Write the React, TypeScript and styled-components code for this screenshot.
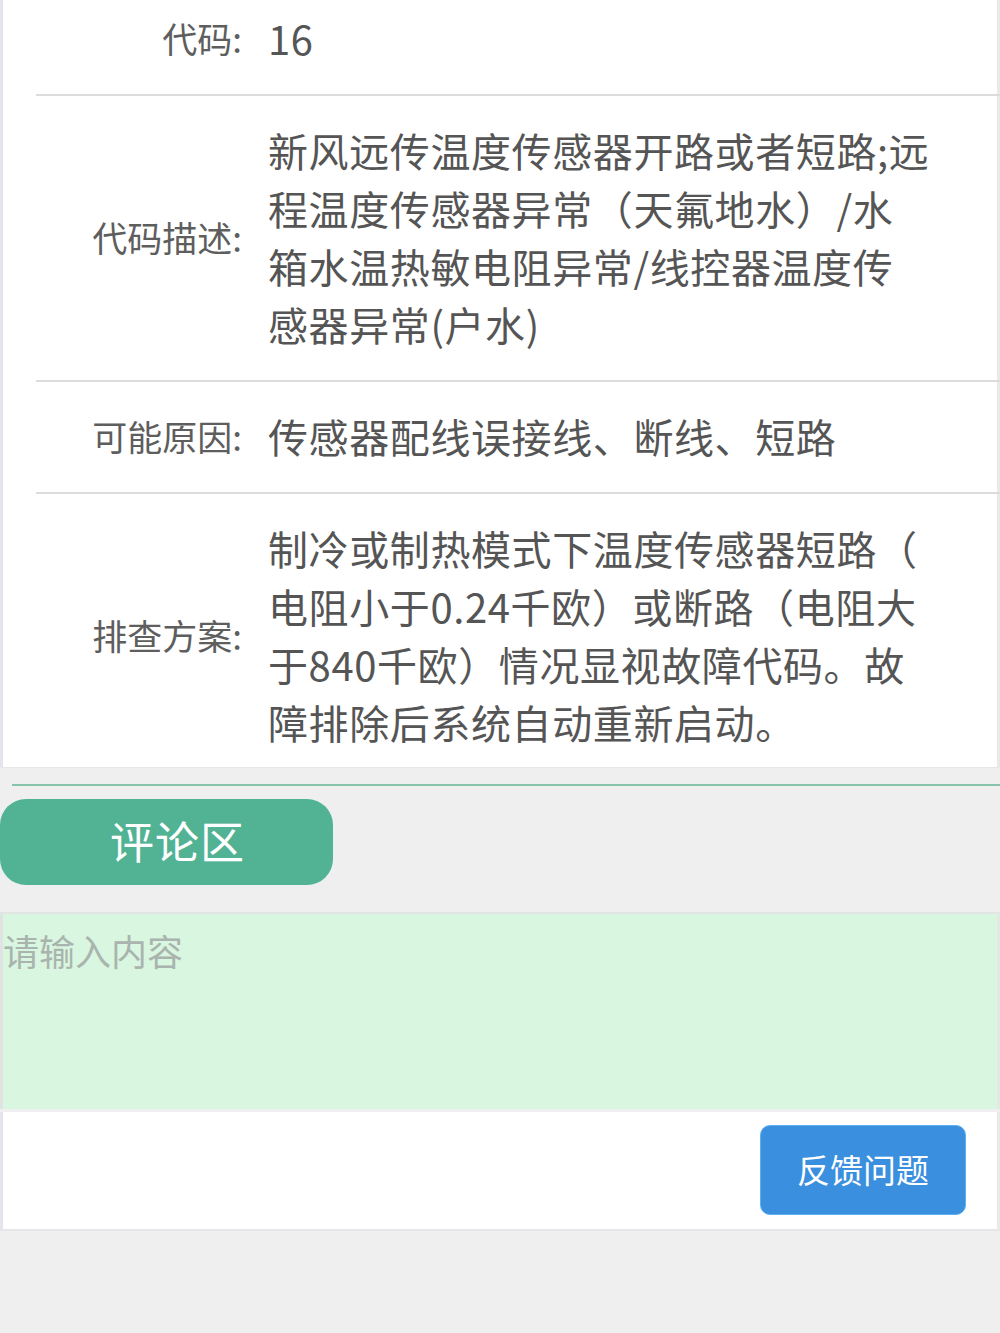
import React from "react";
import styled, { createGlobalStyle } from "styled-components";

const GlobalStyle = createGlobalStyle`
  html, body {
    margin: 0;
    padding: 0;
    background: #efeff0;
    font-family: "Noto Sans CJK SC", "Noto Sans", sans-serif;
  }
  * { box-sizing: border-box; }
`;

const Page = styled.div`
  width: 1000px;
  min-height: 1333px;
  background: #efeff0;
  display: flex;
  flex-direction: column;
`;

const Card = styled.section`
  background: #ffffff;
  border-left: 3px solid #e4e4ec;
  border-right: 3px solid #e9e9ea;
  border-bottom: 1px solid #e6e6e6;
  display: flex;
  flex-direction: column;
`;

const Row = styled.div<{ $first?: boolean; $last?: boolean }>`
  margin-left: 33px;
  display: grid;
  grid-template-columns: 206px 1fr;
  column-gap: 26px;
  align-items: center;
  padding: ${(p) => (p.$first ? "9px" : "25px")} 0 ${(p) => (p.$last ? "16px" : "27px")};
  border-bottom: ${(p) => (p.$last ? "none" : "2px solid #dcdcdc")};
  margin-right: -3px;
`;

const Label = styled.div`
  text-align: right;
  font-size: 35px;
  line-height: 58px;
  color: #5e5e5e;
  white-space: nowrap;
`;

const Value = styled.div`
  font-size: 40px;
  line-height: 58px;
  letter-spacing: 0.6px;
  color: #555555;
  white-space: pre;
`;

const GreenRule = styled.div`
  margin: 16px 0 0 12px;
  height: 2px;
  background: #88c4ac;
`;

const CommentTab = styled.div`
  margin-top: 13px;
  width: 333px;
  height: 86px;
  border-radius: 26px;
  background: #52b394;
  color: #ffffff;
  font-size: 44px;
  letter-spacing: 1px;
  display: flex;
  align-items: center;
  justify-content: center;
  padding: 0 0 4px 22px;
`;

const CommentInput = styled.textarea`
  margin-top: 27px;
  height: 197px;
  width: 100%;
  resize: none;
  border: none;
  border-top: 2px solid #e2e6e3;
  border-left: 3px solid #e0e3e1;
  border-right: 3px solid #e3e8e4;
  background: #d9f6e0;
  font-family: "Noto Sans CJK SC", sans-serif;
  font-size: 36px;
  line-height: 44px;
  padding: 14px 0;
  color: #555;
  outline: none;
  &::placeholder {
    color: #a9b4ae;
  }
`;

const Footer = styled.div`
  margin-top: 3px;
  background: #ffffff;
  border-left: 3px solid #e4e4ec;
  border-right: 3px solid #e9e9ea;
  border-bottom: 2px solid #e6e6ea;
  height: 119px;
  display: flex;
  justify-content: flex-end;
  align-items: flex-start;
  padding: 13px 31px 0 0;
`;

const FeedbackButton = styled.button`
  width: 206px;
  height: 90px;
  border-radius: 10px;
  border: 1px solid #5fb0f2;
  background: #3a8fde;
  color: #ffffff;
  font-family: "Noto Sans CJK SC", sans-serif;
  font-size: 33px;
  display: flex;
  align-items: center;
  justify-content: center;
  padding: 0 0 3px 0;
`;

const rows = [
  { label: "代码:", value: "16" },
  {
    label: "代码描述:",
    value:
      "新风远传温度传感器开路或者短路;远\n程温度传感器异常（天氟地水）/水\n箱水温热敏电阻异常/线控器温度传\n感器异常(户水)",
  },
  { label: "可能原因:", value: "传感器配线误接线、断线、短路" },
  {
    label: "排查方案:",
    value:
      "制冷或制热模式下温度传感器短路（\n电阻小于0.24千欧）或断路（电阻大\n于840千欧）情况显视故障代码。故\n障排除后系统自动重新启动。",
  },
];

export default function App() {
  return (
    <>
      <GlobalStyle />
      <Page>
        <Card>
          {rows.map((r, i) => (
            <Row key={r.label} $first={i === 0} $last={i === rows.length - 1}>
              <Label>{r.label}</Label>
              <Value>{r.value}</Value>
            </Row>
          ))}
        </Card>
        <GreenRule />
        <CommentTab>评论区</CommentTab>
        <CommentInput placeholder="请输入内容" />
        <Footer>
          <FeedbackButton>反馈问题</FeedbackButton>
        </Footer>
      </Page>
    </>
  );
}
